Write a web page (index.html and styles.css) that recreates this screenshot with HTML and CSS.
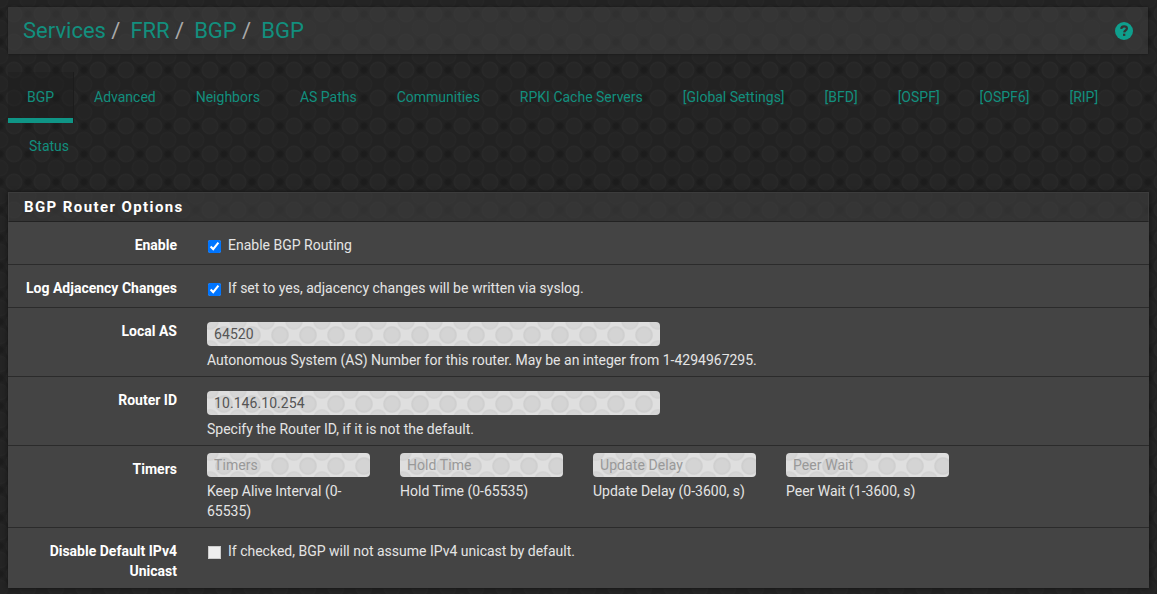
FILE: index.html
```html
<!DOCTYPE html>
<html lang="en">

<head>
    <meta charset="UTF-8">
    <meta name="viewport" content="width=device-width, initial-scale=1.0">
    <link rel="stylesheet" href="styles.css">
    <title>Services: FRR: BGP</title>
</head>

<body>
    <header class="header">
        <ol class="breadcrumb">
            <li><a>Services</a></li>
            <li><a>FRR</a></li>
            <li><a>BGP</a></li>
            <li><a>BGP</a></li>
        </ol>
        <svg class="help" viewBox="0 0 18 18">
            <circle cx="9" cy="9" r="9" />
            <path d="M6.2 6.9C6.4 5.2 7.5 4.4 9.1 4.4C10.8 4.4 11.9 5.3 11.9 6.6C11.9 8.4 9.3 8.4 9.2 10.4" />
            <rect x="8" y="11.7" width="2.3" height="2.2" />
        </svg>
    </header>

    <ul class="tabs">
        <li class="active"><a>BGP</a></li>
        <li><a>Advanced</a></li>
        <li><a>Neighbors</a></li>
        <li><a>AS Paths</a></li>
        <li><a>Communities</a></li>
        <li><a>RPKI Cache Servers</a></li>
        <li><a>[Global Settings]</a></li>
        <li><a>[BFD]</a></li>
        <li><a>[OSPF]</a></li>
        <li><a>[OSPF6]</a></li>
        <li><a>[RIP]</a></li>
        <li><a>Status</a></li>
    </ul>

    <form class="panel">
        <h2 class="panel-title">BGP Router Options</h2>
        <div class="group">
            <label class="name">Enable</label>
            <div class="field">
                <label class="check"><input type="checkbox" checked>Enable BGP Routing</label>
            </div>
        </div>
        <div class="group">
            <label class="name">Log Adjacency Changes</label>
            <div class="field">
                <label class="check"><input type="checkbox" checked>If set to yes, adjacency changes will be written via syslog.</label>
            </div>
        </div>
        <div class="group">
            <label class="name">Local AS</label>
            <div class="field">
                <input class="control" type="text" value="64520">
                <span class="help-block">Autonomous System (AS) Number for this router. May be an integer from 1-4294967295.</span>
            </div>
        </div>
        <div class="group">
            <label class="name">Router ID</label>
            <div class="field">
                <input class="control" type="text" value="10.146.10.254">
                <span class="help-block">Specify the Router ID, if it is not the default.</span>
            </div>
        </div>
        <div class="group timers">
            <label class="name">Timers</label>
            <div class="field">
                <input class="control" type="text" placeholder="Timers">
                <span class="help-block">Keep Alive Interval (0-65535)</span>
            </div>
            <div class="field">
                <input class="control" type="text" placeholder="Hold Time">
                <span class="help-block">Hold Time (0-65535)</span>
            </div>
            <div class="field">
                <input class="control" type="text" placeholder="Update Delay">
                <span class="help-block">Update Delay (0-3600, s)</span>
            </div>
            <div class="field">
                <input class="control" type="text" placeholder="Peer Wait">
                <span class="help-block">Peer Wait (1-3600, s)</span>
            </div>
        </div>
        <div class="group">
            <label class="name">Disable Default IPv4 Unicast</label>
            <div class="field">
                <label class="check"><input type="checkbox">If checked, BGP will not assume IPv4 unicast by default.</label>
            </div>
        </div>
    </form>
</body>

</html>
```
FILE: styles.css
```css
* {
    box-sizing: border-box;
}

body {
    margin: 0;
    padding: 7px 8px 0;
    height: 594px;
    overflow: hidden;
    font-family: Roboto, sans-serif;
    font-size: 14px;
    line-height: 20px;
    color: #e4e4e4;
    background-color: #222;
    background-image:
        radial-gradient(circle, #262626 6px, #292929 8px, transparent 9px),
        radial-gradient(circle, #242424 6px, #262626 8px, transparent 9px),
        radial-gradient(circle, #1c1c1c 2px, transparent 5px);
    background-size: 28px 28px;
    background-position: 0 0, 14px 14px, 14px 0;
}

.header {
    display: flex;
    justify-content: space-between;
    align-items: center;
    width: 1140px;
    height: 47px;
    padding: 0 15px;
    background: rgba(68, 68, 68, .5);
    box-shadow: 0 0 2px #151515;
}

.breadcrumb {
    display: flex;
    margin: 0;
    padding: 0;
    list-style: none;
    font-size: 22px;
    line-height: 30px;
}

.breadcrumb li + li::before {
    content: "/";
    padding: 0 10px 0 5.4px;
    color: #aaa;
}

a {
    color: #128f7e;
}

.help {
    width: 18px;
    height: 18px;
    fill: #0f9f8d;
}

.help path {
    fill: none;
    stroke: #333;
    stroke-width: 2.2;
}

.help rect {
    fill: #333;
}

.tabs {
    display: flex;
    flex-wrap: wrap;
    margin: 18px 0 0;
    padding: 0;
    list-style: none;
}

.tabs li {
    height: 49px;
    padding: 15px 20px;
}

.tabs li:last-child {
    padding-left: 21px;
}

.tabs li.active {
    height: 51px;
    width: 65px;
    margin-right: 1px;
    margin-bottom: -2px;
    padding-left: 19px;
    background: rgba(30, 30, 30, .35);
    border-bottom: 5px solid #0f9586;
    box-shadow: 1px 0 #1c1c1c;
}

.panel {
    width: 1141px;
    margin-top: 22px;
    box-shadow: 0 0 4px #111;
}

.panel-title {
    height: 30px;
    margin: 0;
    padding: 4px 15px;
    font-size: 15px;
    font-weight: 700;
    letter-spacing: 1.4px;
    color: #fff;
    background: rgba(64, 64, 64, .6);
    border: 1px solid #3c3c3c;
    border-bottom: 1px solid #222;
}

.group {
    display: flex;
    min-height: 43px;
    padding: 6px 0;
    background: #444;
    border-bottom: 1px solid #2b2b2b;
}

.group:last-child {
    height: 60px;
    border-bottom: 0;
}

.name {
    width: 184px;
    padding: 7px 15px 0 0;
    text-align: right;
    font-weight: 700;
    color: #fff;
}

.field {
    flex: 1;
    padding: 7px 15px 0;
}

.check {
    display: flex;
    align-items: center;
}

.check input {
    width: 13px;
    height: 13px;
    margin: 2px 7px 0 1px;
}

.check input:not(:checked) {
    appearance: none;
    background: #eee;
    border: 1px solid #ccc;
}

.control {
    display: block;
    width: 453px;
    height: 24px;
    margin-top: 1px;
    padding: 0 7px;
    border: 0;
    border-radius: 4px;
    font: 14px Roboto, sans-serif;
    letter-spacing: .07px;
    color: #555;
    background-color: #dfdfdf;
    background-image:
        radial-gradient(circle, #d4d4d4 6px, #cecece 8px, transparent 9.5px),
        radial-gradient(circle, #d6d6d6 6px, #d2d2d2 8px, transparent 9.5px);
    background-size: 28px 28px;
    background-position: 3px -1px, 17px 13px;
}

.control::placeholder {
    color: #999;
}

.help-block {
    display: block;
    margin-top: 4px;
}

.timers .field {
    flex: 0 0 193px;
    padding-top: 0;
}

.timers .control {
    width: 163px;
}
```
